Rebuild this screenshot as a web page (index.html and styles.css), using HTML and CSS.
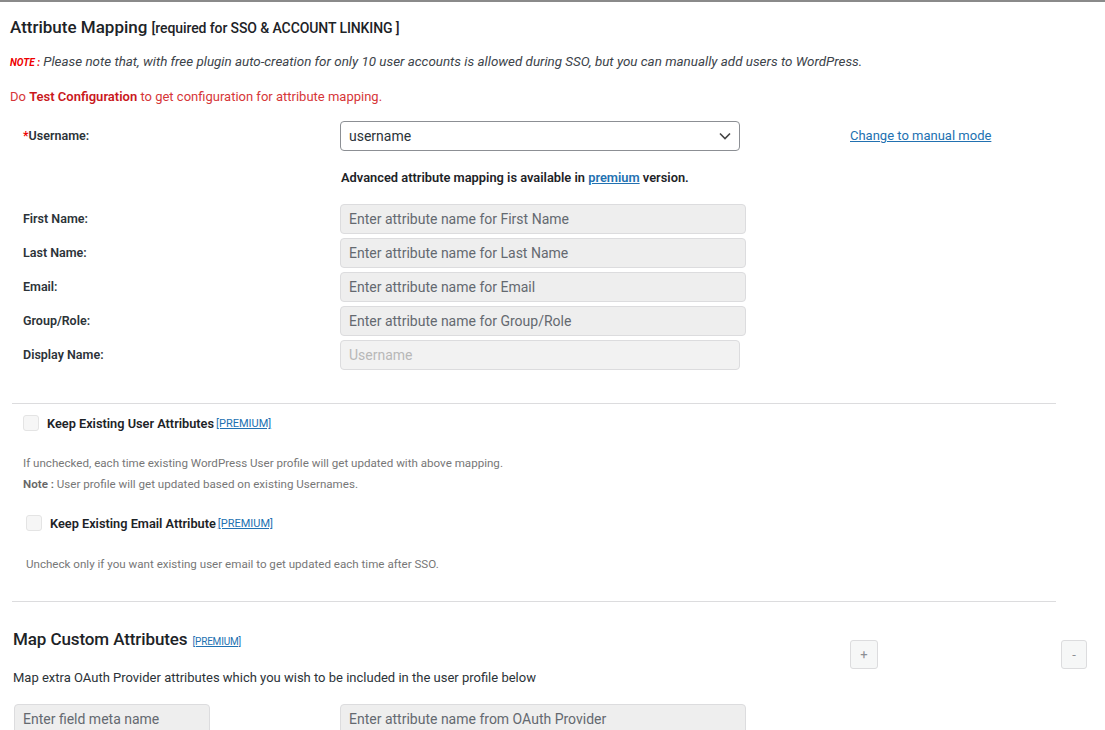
FILE: index.html
```html
<!DOCTYPE html>
<html>
<head>
<meta charset="utf-8">
<link rel="stylesheet" href="styles.css">
</head>
<body>
<div class="page">
  <h2 class="title">Attribute Mapping <span class="title-sub">[required for SSO &amp; ACCOUNT LINKING ]</span></h2>
  <p class="note"><b class="note-tag">NOTE :</b> Please note that, with free plugin auto-creation for only 10 user accounts is allowed during SSO, but you can manually add users to WordPress.</p>
  <p class="test">Do <b>Test Configuration</b> to get configuration for attribute mapping.</p>

  <div class="map">
    <div class="row row-user">
      <label class="lbl"><span class="req">*</span>Username:</label>
      <div class="select">username
        <svg class="chev" width="12" height="8" viewBox="0 0 12 8"><path d="M1 1.5 6 6.5 11 1.5" fill="none" stroke="#444" stroke-width="1.6"/></svg>
      </div>
      <a class="manual" href="#">Change to manual mode</a>
    </div>
    <div class="row row-adv">
      <span></span>
      <p class="adv">Advanced attribute mapping is available in <a href="#">premium</a> version.</p>
    </div>
    <div class="row"><label class="lbl">First Name:</label><div class="inp">Enter attribute name for First Name</div></div>
    <div class="row"><label class="lbl">Last Name:</label><div class="inp">Enter attribute name for Last Name</div></div>
    <div class="row"><label class="lbl">Email:</label><div class="inp">Enter attribute name for Email</div></div>
    <div class="row"><label class="lbl">Group/Role:</label><div class="inp">Enter attribute name for Group/Role</div></div>
    <div class="row"><label class="lbl">Display Name:</label><div class="inp inp-dis">Username</div></div>
  </div>

  <hr class="sep sep1">

  <div class="chk-row chk1"><span class="chk"></span><span class="chk-lbl">Keep Existing User Attributes</span> <a class="prem" href="#">[PREMIUM]</a></div>
  <p class="hint hint1">If unchecked, each time existing WordPress User profile will get updated with above mapping.</p>
  <p class="hint hint2"><b>Note :</b> User profile will get updated based on existing Usernames.</p>
  <div class="chk-row chk2"><span class="chk"></span><span class="chk-lbl">Keep Existing Email Attribute</span> <a class="prem" href="#">[PREMIUM]</a></div>
  <p class="hint hint3">Uncheck only if you want existing user email to get updated each time after SSO.</p>

  <hr class="sep sep2">

  <div class="custom-head">
    <h3 class="custom-title">Map Custom Attributes <a class="prem prem-sm" href="#">[PREMIUM]</a></h3>
    <div class="btn btn-plus">+</div>
    <div class="btn btn-minus">-</div>
  </div>
  <p class="extra">Map extra OAuth Provider attributes which you wish to be included in the user profile below</p>
  <div class="custom-row">
    <div class="inp inp-meta">Enter field meta name</div>
    <div class="inp inp-attr">Enter attribute name from OAuth Provider</div>
  </div>
</div>
</body>
</html>
```

FILE: styles.css
```css
html, body {
  margin: 0;
  padding: 0;
  background: #fff;
  overflow: hidden;
}
body {
  font-family: Roboto, "Liberation Sans", sans-serif;
  color: #2c3338;
  font-size: 13px;
}
.page {
  border-top: 2px solid #8a8a8a;
  padding: 0 0 0 10px;
  height: 728px;
}
.title {
  margin: 14px 0 0 0;
  font-size: 17px;
  font-weight: 500;
  line-height: 22px;
  color: #1d2327;
}
.title-sub {
  font-size: 14px;
  font-weight: 500;
  letter-spacing: -0.1px;
}
.note {
  margin: 13px 0 0 0;
  font-style: italic;
  font-size: 13.4px;
  line-height: 20px;
  color: #3c434a;
}
.note-tag {
  color: #e00;
  font-size: 10px;
  font-weight: 700;
}
.test {
  margin: 14px 0 0 0;
  color: #d63638;
  font-size: 13px;
  line-height: 20px;
}
.test b {
  color: #c9181c;
  font-weight: 600;
}
.map {
  margin-top: 14px;
  padding-left: 13px;
}
.row {
  display: grid;
  grid-template-columns: 317px 406px 1fr;
  align-items: center;
  height: 30px;
  margin-bottom: 4px;
}
.lbl {
  font-weight: 600;
  font-size: 12.5px;
  color: #2c3338;
  margin-top: -2px;
}
.req {
  color: #e00;
}
.select {
  height: 28px;
  border: 1px solid #8c8f94;
  border-radius: 4px;
  display: flex;
  align-items: center;
  justify-content: space-between;
  padding: 0 8px;
  box-sizing: content-box;
  width: 382px;
  font-size: 14px;
  color: #2c3338;
}
.manual {
  margin-left: 104px;
  color: #2271b1;
  font-size: 13px;
  margin-top: -2px;
}
.row-user {
  margin-bottom: 9px;
}
.row-adv {
  height: 34px;
  margin-bottom: 10px;
}
.adv {
  grid-column: 2 / 4;
  margin: 0 0 0 1px;
  font-weight: 600;
  font-size: 12.85px;
  color: #1d2327;
}
.adv a {
  color: #2271b1;
}
.inp {
  height: 28px;
  border: 1px solid #dcdcde;
  border-radius: 4px;
  background: #eeeeee;
  display: flex;
  align-items: center;
  padding: 0 8px;
  font-size: 14px;
  color: #646970;
}
.inp-dis {
  width: 382px;
  background: #f2f2f2;
  color: #b8b8b8;
}
.sep {
  border: 0;
  border-top: 1px solid #dcdcde;
  margin: 0 0 0 2px;
  width: 1044px;
}
.sep1 {
  margin-top: 33px;
}
.chk-row {
  display: flex;
  align-items: center;
  height: 20px;
}
.chk1 {
  margin: 9px 0 0 13px;
}
.chk2 {
  margin: 21px 0 0 16px;
}
.chk {
  width: 14px;
  height: 14px;
  border: 1px solid #e4e4e4;
  border-radius: 3px;
  background: #f6f6f6;
  margin-right: 8px;
}
.chk-lbl {
  font-weight: 600;
  font-size: 12.75px;
  color: #1d2327;
}
.prem {
  color: #2271b1;
  font-size: 11px;
  margin-left: 2px;
}
.hint {
  margin: 0;
  font-size: 11.6px;
  color: #777;
  line-height: 16px;
}
.hint b {
  color: #666;
  font-weight: 600;
}
.hint1 {
  margin: 22px 0 0 13px;
}
.hint2 {
  margin: 5px 0 0 13px;
}
.hint3 {
  margin: 23px 0 0 16px;
}
.sep2 {
  margin-top: 29px;
}
.custom-head {
  display: flex;
  align-items: flex-start;
  margin-top: 27px;
  padding-left: 3px;
}
.custom-title {
  margin: 0;
  font-size: 17px;
  font-weight: 500;
  line-height: 20px;
  color: #1d2327;
  width: 837px;
  letter-spacing: -0.1px;
}
.prem-sm {
  font-size: 10px;
  font-weight: 400;
  letter-spacing: -0.2px;
  margin-left: 1px;
}
.btn {
  width: 26px;
  height: 27px;
  border: 1px solid #dcdcde;
  border-radius: 3px;
  background: #f6f7f7;
  color: #8c8f94;
  display: flex;
  align-items: center;
  justify-content: center;
  font-size: 13px;
  margin-top: 11px;
  margin-bottom: -20px;
}
.btn-minus {
  margin-left: 183px;
  width: 24px;
}
.extra {
  margin: 18px 0 0 3px;
  font-size: 13px;
  color: #2c3338;
  line-height: 16px;
}
.custom-row {
  display: flex;
  margin-top: 18px;
  padding-left: 4px;
}
.inp-meta {
  width: 178px;
}
.inp-attr {
  width: 388px;
  margin-left: 130px;
}
```
